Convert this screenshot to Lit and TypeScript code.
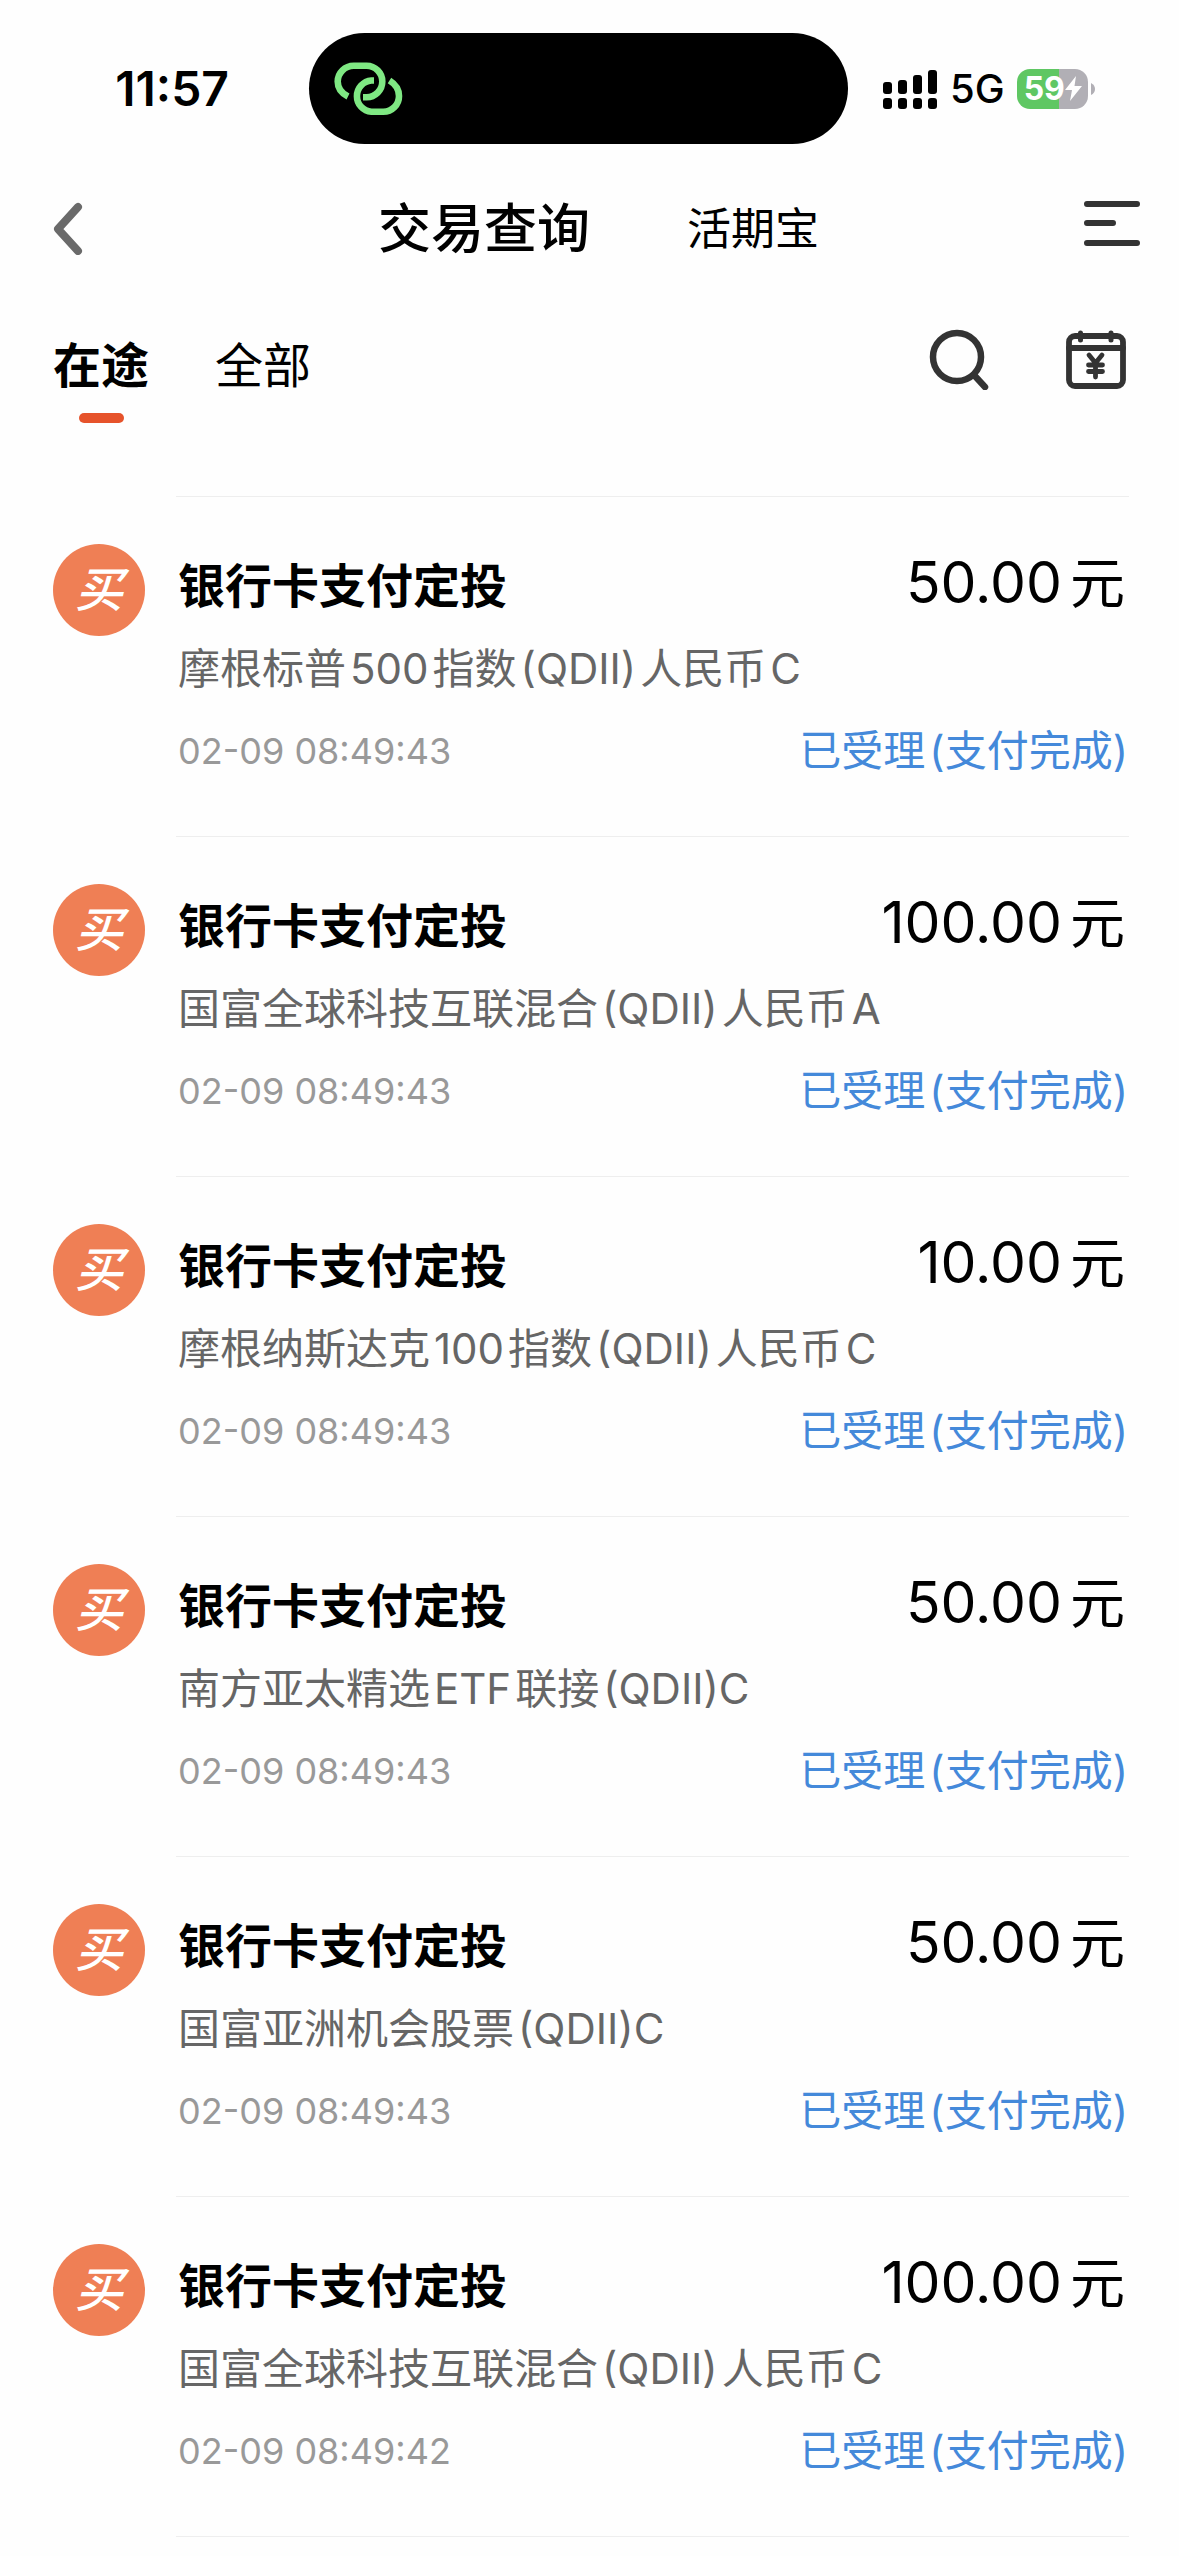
import { LitElement, html, css } from "lit";
import { customElement, property } from "lit/decorators.js";

interface Order {
  title: string;
  fund: string;
  time: string;
  amount: string;
  status: string;
}

const order = (fund: string, amount: string, time = "02-09 08:49:43"): Order => ({
  title: "银行卡支付定投",
  fund,
  time,
  amount,
  status: "已受理(支付完成)",
});

const ORDERS: Order[] = [
  order("摩根标普500指数(QDII)人民币C", "50.00"),
  order("国富全球科技互联混合(QDII)人民币A", "100.00"),
  order("摩根纳斯达克100指数(QDII)人民币C", "10.00"),
  order("南方亚太精选ETF联接(QDII)C", "50.00"),
  order("国富亚洲机会股票(QDII)C", "50.00"),
  order("国富全球科技互联混合(QDII)人民币C", "100.00", "02-09 08:49:42"),
];

/** Splits mixed text where Han meets Latin, so that a small gap can stand between the runs. */
const runs = (text: string) =>
  text
    .split(/(?<=[\u4e00-\u9fff])(?=[A-Za-z0-9(])|(?<=[A-Za-z0-9)])(?=[\u4e00-\u9fff])/)
    .map((run) => html`<span>${run}</span>`);

@customElement("status-bar")
export class StatusBar extends LitElement {
  static styles = css`
    :host {
      display: grid;
      grid-template-columns: 1fr 539px 1fr;
      align-items: center;
      padding: 33px 22px 0 0;
      font-family: Inter, "Liberation Sans", sans-serif;
      color: #000;
    }
    .time {
      padding-right: 80px;
      font-size: 48px;
      font-weight: 600;
      line-height: 56px;
      text-align: right;
    }
    .island {
      display: flex;
      align-items: center;
      height: 111px;
      padding-left: 22px;
      border-radius: 56px;
      background: #000;
    }
    .signals {
      display: flex;
      align-items: center;
      padding-left: 34px;
    }
    .network {
      margin: 0 12px;
      font-size: 40px;
      font-weight: 500;
      line-height: 48px;
    }
    .battery {
      display: flex;
      align-items: center;
      gap: 3px;
    }
    .cell {
      display: flex;
      align-items: center;
      width: 71px;
      height: 44px;
      padding-left: 7px;
      box-sizing: border-box;
      border-radius: 13px;
      background: linear-gradient(to right, #5fc763 59%, #b1afb5 59%);
      color: #fff;
      font-size: 32px;
      font-weight: 700;
      line-height: 40px;
      height: 40px;
    }
    svg {
      display: block;
      flex: none;
    }
  `;

  render() {
    return html`
      <div class="time">11:57</div>
      <div class="island">
        <svg width="76" height="60" viewBox="0 0 76 60" fill="none" stroke="#7fe883" stroke-width="6.6">
          <path d="M17 37.500C10 34 6.700 28.500 6.700 22.500A16 16 0 0 1 22.700 6.800H35.600A15.700 15.700 0 0 1 35.600 38.200H32" />
          <path d="M43 21.500H40.400A15.700 15.700 0 0 0 40.400 52.800H52.300A15.700 15.700 0 0 0 68 37C68 31 65 25.500 58.500 21.500" />
        </svg>
      </div>
      <div class="signals">
        <svg width="56" height="40" viewBox="0 0 56 40" fill="#000">
          <rect x="1" y="13" width="9" height="12" rx="3" />
          <rect x="16" y="11" width="9" height="14" rx="3" />
          <rect x="31" y="6" width="9" height="19" rx="3" />
          <rect x="46" y="1" width="9" height="24" rx="3" />
          <rect x="1" y="29" width="9" height="11" rx="3" />
          <rect x="16" y="29" width="9" height="11" rx="3" />
          <rect x="31" y="29" width="9" height="11" rx="3" />
          <rect x="46" y="29" width="9" height="11" rx="3" />
        </svg>
        <span class="network">5G</span>
        <div class="battery">
          <div class="cell">
            59
            <svg width="17" height="25" viewBox="0 0 17 25" fill="#fff">
              <path d="M11 0 0 14H7L5 25 17 10H9.500Z" />
            </svg>
          </div>
          <svg width="4" height="12" viewBox="0 0 4 12" fill="#b1afb5"><path d="M0 0Q4 2 4 6T0 12Z" /></svg>
        </div>
      </div>
    `;
  }
}

@customElement("order-row")
export class OrderRow extends LitElement {
  @property({ attribute: false }) order!: Order;

  static styles = css`
    :host {
      display: grid;
      grid-template-columns: 92px 1fr;
      column-gap: 31px;
      padding-left: 53px;
    }
    .badge {
      display: flex;
      align-items: center;
      justify-content: center;
      width: 92px;
      height: 92px;
      margin-top: 48px;
      border-radius: 50%;
      background: #ef7f55;
      color: #fff;
      font-size: 48px;
      font-style: italic;
      font-weight: 500;
      line-height: 92px;
    }
    .body {
      display: grid;
      grid-template-columns: 1fr auto;
      align-items: center;
      grid-template-rows: 84px 81px 84px;
      margin-right: 50px;
      padding: 47px 1px 43px 2px;
      border-top: 1px solid #eeeeee;
    }
    .title {
      margin: 0;
      font-size: 47px;
      font-weight: 700;
      line-height: 84px;
      color: #000;
    }
    .amount {
      display: flex;
      align-items: baseline;
      align-self: start;
      justify-self: end;
      gap: 8px;
      padding-right: 3px;
      font-size: 57px;
      line-height: 78px;
      color: #000;
    }
    .unit {
      font-size: 55px;
    }
    .fund,
    .status {
      display: flex;
      align-items: baseline;
      gap: 4px;
      font-size: 42px;
      line-height: 60px;
    }
    .fund {
      grid-column: 1 / -1;
      color: #666;
    }
    .status {
      color: #4489da;
    }
    .time {
      font-size: 36px;
      color: #999;
    }
  `;

  render() {
    const { title, fund, time, amount, status } = this.order;
    return html`
      <div class="badge">买</div>
      <div class="body">
        <h2 class="title">${title}</h2>
        <div class="amount"><span>${amount}</span><span class="unit">元</span></div>
        <div class="fund">${runs(fund)}</div>
        <time class="time">${time}</time>
        <div class="status">${runs(status)}</div>
      </div>
    `;
  }
}

@customElement("app-root")
export class AppRoot extends LitElement {
  static styles = css`
    :host {
      display: block;
      background: #fefefe;
      font-family: Inter, "Noto Sans CJK SC", sans-serif;
      color: #000;
    }
    button {
      padding: 0;
      border: 0;
      background: none;
      font: inherit;
      color: inherit;
      cursor: pointer;
    }
    svg {
      display: block;
    }
    .nav {
      display: grid;
      grid-template-columns: 1fr auto 1fr;
      align-items: center;
      height: 168px;
      padding: 0 38px 0 52px;
    }
    .back {
      justify-self: start;
    }
    .menu {
      justify-self: end;
    }
    .pages {
      display: flex;
      align-items: center;
      gap: 97px;
      padding: 2px 0 0 4px;
    }
    .heading {
      margin: 0;
      font-size: 53px;
      font-weight: 500;
      line-height: 80px;
    }
    .page {
      font-size: 44px;
      line-height: 64px;
    }
    .tools {
      display: flex;
      align-items: flex-start;
      height: 184px;
      padding: 16px 53px 0;
      box-sizing: border-box;
    }
    .tab {
      display: grid;
      justify-items: center;
      row-gap: 11px;
      padding-top: 2px;
      margin-right: 66px;
      font-size: 48px;
      line-height: 72px;
    }
    .tab[aria-selected="true"] {
      font-weight: 700;
    }
    .tab[aria-selected="true"]::after {
      content: "";
      width: 45px;
      height: 10px;
      border-radius: 5px;
      background: #e6532b;
    }
    .tabs {
      display: flex;
      align-items: flex-start;
      flex: 1;
    }
    .actions {
      display: flex;
      gap: 75px;
    }
    .list {
      margin: 0;
      padding: 0;
      list-style: none;
    }
    .end {
      height: 19px;
      margin: 0 50px 0 176px;
      border-top: 1px solid #eeeeee;
    }
  `;

  render() {
    return html`
      <status-bar></status-bar>
      <header class="nav">
        <button class="back" aria-label="返回">
          <svg width="32" height="54" viewBox="0 0 32 54" fill="none" stroke="#6a6a6a" stroke-width="8" stroke-linecap="round" stroke-linejoin="round">
            <path d="M26 6 6 28 26 50" />
          </svg>
        </button>
        <div class="pages">
          <h1 class="heading">交易查询</h1>
          <button class="page">活期宝</button>
        </div>
        <button class="menu" aria-label="菜单">
          <svg width="58" height="54" viewBox="0 0 58 54" fill="none" stroke="#333" stroke-width="6" stroke-linecap="round">
            <path d="M4 3H54M4 22H30M4 42H54" />
          </svg>
        </button>
      </header>
      <div class="tools">
        <div class="tabs" role="tablist">
          <button class="tab" role="tab" aria-selected="true">在途</button>
          <button class="tab" role="tab" aria-selected="false">全部</button>
        </div>
        <div class="actions">
          <button aria-label="搜索">
            <svg width="64" height="62" viewBox="0 0 64 62" fill="none" stroke="#333" stroke-width="6.5" stroke-linecap="round">
              <circle cx="30" cy="29" r="24" />
              <path d="M47 47 58 59" />
            </svg>
          </button>
          <button aria-label="交易日历">
            <svg width="60" height="62" viewBox="0 0 60 62" fill="none" stroke="#333" stroke-width="5.800" stroke-linecap="round" stroke-linejoin="round">
              <rect x="3" y="8" width="54" height="50" rx="6" />
              <path d="M3 20H57" />
              <path d="M14.500 5V12M45 5V12" stroke-width="5" />
              <path d="M23 27 29.500 35 36 27M29.500 35V49M22.500 37H36.500M22.500 43.500H36.500" stroke-width="4.800" />
            </svg>
          </button>
        </div>
      </div>
      <ul class="list">
        ${ORDERS.map((o) => html`<li><order-row .order=${o}></order-row></li>`)}
      </ul>
      <div class="end"></div>
    `;
  }
}
